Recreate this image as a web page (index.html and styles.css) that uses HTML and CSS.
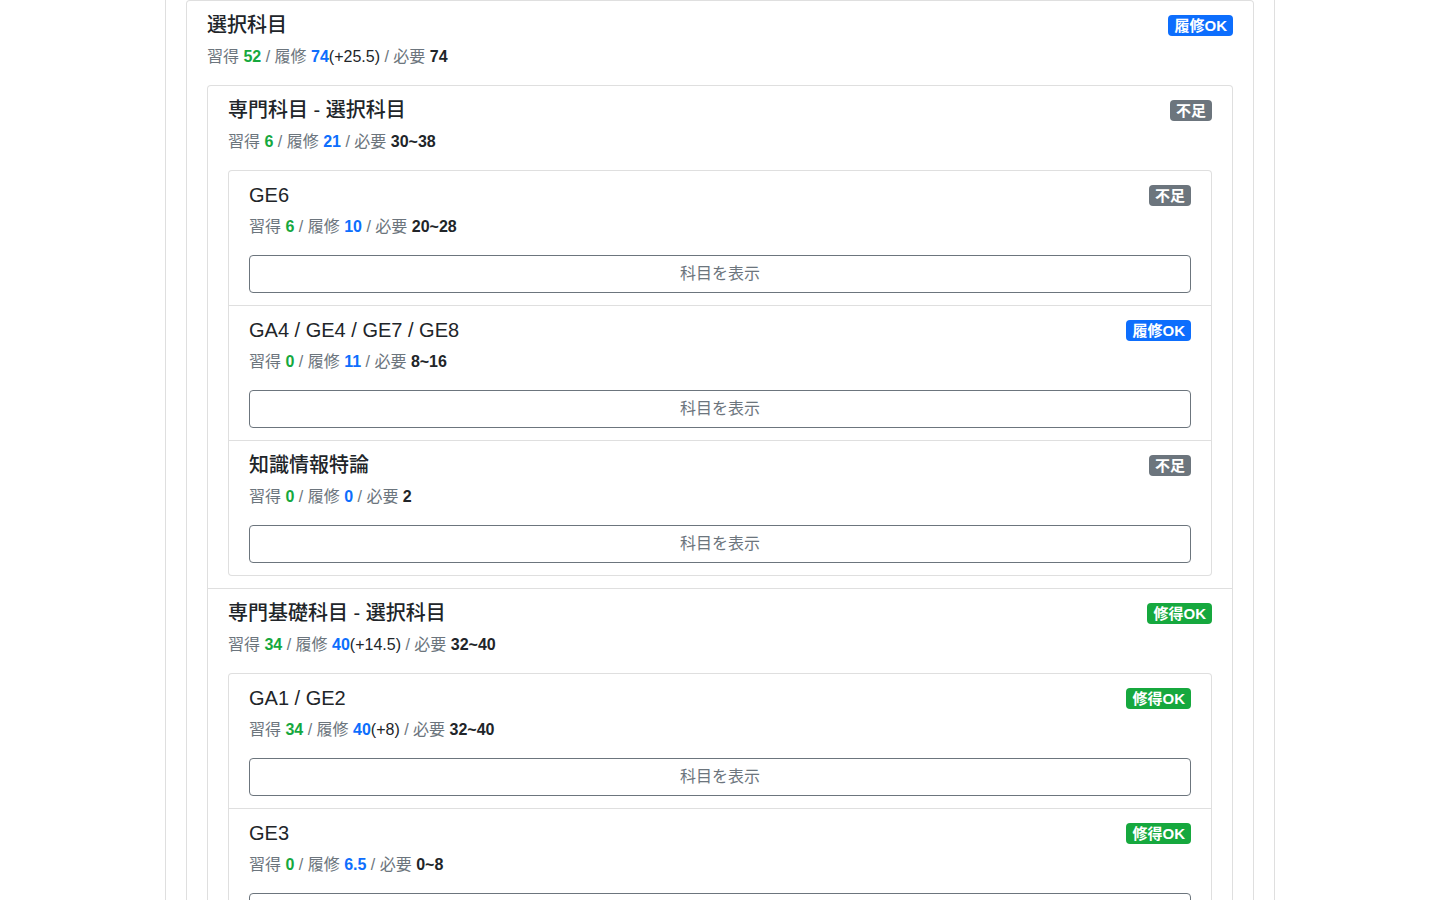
FILE: index.html
```html
<!DOCTYPE html>
<html lang="ja">
<head>
<meta charset="utf-8">
<title>選択科目</title>
<link rel="stylesheet" href="styles.css">
</head>
<body>
<div class="container">
  <div class="list-group">
    <div class="item item-outer">
      <div class="list-group">
        <div class="item">
          <h5 class="title"><span>選択科目</span><span class="badge badge-blue">履修OK</span></h5>
          <p class="stats">習得 <b class="g">52</b> / 履修 <b class="b">74</b><span class="extra">(+25.5)</span> / 必要 <b class="d">74</b></p>
          <div class="list-group">
            <div class="item">
              <h5 class="title"><span>専門科目 - 選択科目</span><span class="badge badge-grey">不足</span></h5>
              <p class="stats">習得 <b class="g">6</b> / 履修 <b class="b">21</b> / 必要 <b class="d">30~38</b></p>
              <div class="list-group">
                <div class="item">
                  <h5 class="title"><span>GE6</span><span class="badge badge-grey">不足</span></h5>
                  <p class="stats">習得 <b class="g">6</b> / 履修 <b class="b">10</b> / 必要 <b class="d">20~28</b></p>
                  <button class="btn">科目を表示</button>
                </div>
                <div class="item">
                  <h5 class="title"><span>GA4 / GE4 / GE7 / GE8</span><span class="badge badge-blue">履修OK</span></h5>
                  <p class="stats">習得 <b class="g">0</b> / 履修 <b class="b">11</b> / 必要 <b class="d">8~16</b></p>
                  <button class="btn">科目を表示</button>
                </div>
                <div class="item">
                  <h5 class="title"><span>知識情報特論</span><span class="badge badge-grey">不足</span></h5>
                  <p class="stats">習得 <b class="g">0</b> / 履修 <b class="b">0</b> / 必要 <b class="d">2</b></p>
                  <button class="btn">科目を表示</button>
                </div>
              </div>
            </div>
            <div class="item">
              <h5 class="title"><span>専門基礎科目 - 選択科目</span><span class="badge badge-green">修得OK</span></h5>
              <p class="stats">習得 <b class="g">34</b> / 履修 <b class="b">40</b><span class="extra">(+14.5)</span> / 必要 <b class="d">32~40</b></p>
              <div class="list-group">
                <div class="item">
                  <h5 class="title"><span>GA1 / GE2</span><span class="badge badge-green">修得OK</span></h5>
                  <p class="stats">習得 <b class="g">34</b> / 履修 <b class="b">40</b><span class="extra">(+8)</span> / 必要 <b class="d">32~40</b></p>
                  <button class="btn">科目を表示</button>
                </div>
                <div class="item">
                  <h5 class="title"><span>GE3</span><span class="badge badge-green">修得OK</span></h5>
                  <p class="stats">習得 <b class="g">0</b> / 履修 <b class="b">6.5</b> / 必要 <b class="d">0~8</b></p>
                  <button class="btn">科目を表示</button>
                </div>
              </div>
            </div>
          </div>
        </div>
      </div>
    </div>
  </div>
</div>
</body>
</html>
```

FILE: styles.css
```css
* { box-sizing: border-box; }

html, body {
  margin: 0;
  padding: 0;
  background: #fff;
}

body {
  font-family: "Liberation Sans", "Noto Sans CJK JP", sans-serif;
  font-size: 16px;
  line-height: 1.5;
  color: #212529;
}

.container {
  width: 1140px;
  padding: 0 15px;
  margin: 0 auto;
}

.list-group {
  display: flex;
  flex-direction: column;
}

.item {
  border: 1px solid rgba(0, 0, 0, 0.125);
  padding: 12px 20px;
  background: #fff;
}

.item + .item {
  border-top-width: 0;
}

.item:first-child {
  border-top-left-radius: 4px;
  border-top-right-radius: 4px;
}

.item:last-child {
  border-bottom-left-radius: 4px;
  border-bottom-right-radius: 4px;
}

.item-outer {
  margin-top: -13px;
}

.title {
  display: flex;
  justify-content: space-between;
  align-items: center;
  margin: 0 0 8px;
  font-size: 20px;
  font-weight: 500;
  line-height: 1.2;
  color: #212529;
}

.badge {
  display: inline-block;
  font-size: 15px;
  font-weight: 700;
  line-height: 15px;
  padding: 3px 6px;
  border-radius: 4px;
  color: #fff;
  white-space: nowrap;
}

.badge-blue { background: #0d6efd; }
.badge-grey { background: #6c757d; }
.badge-green { background: #16a83e; }

.stats {
  margin: 0 0 16px;
  color: #6c757d;
}

.stats b { font-weight: 700; }
.stats .g { color: #16a83e; }
.stats .b { color: #0d6efd; }
.stats .d { color: #212529; }
.stats .extra { color: #212529; }

.btn {
  display: block;
  width: 100%;
  font-family: inherit;
  font-size: 16px;
  line-height: 1.5;
  padding: 6px 12px;
  color: #6c757d;
  background: transparent;
  border: 1px solid #6c757d;
  border-radius: 4px;
  text-align: center;
  cursor: pointer;
}
```
